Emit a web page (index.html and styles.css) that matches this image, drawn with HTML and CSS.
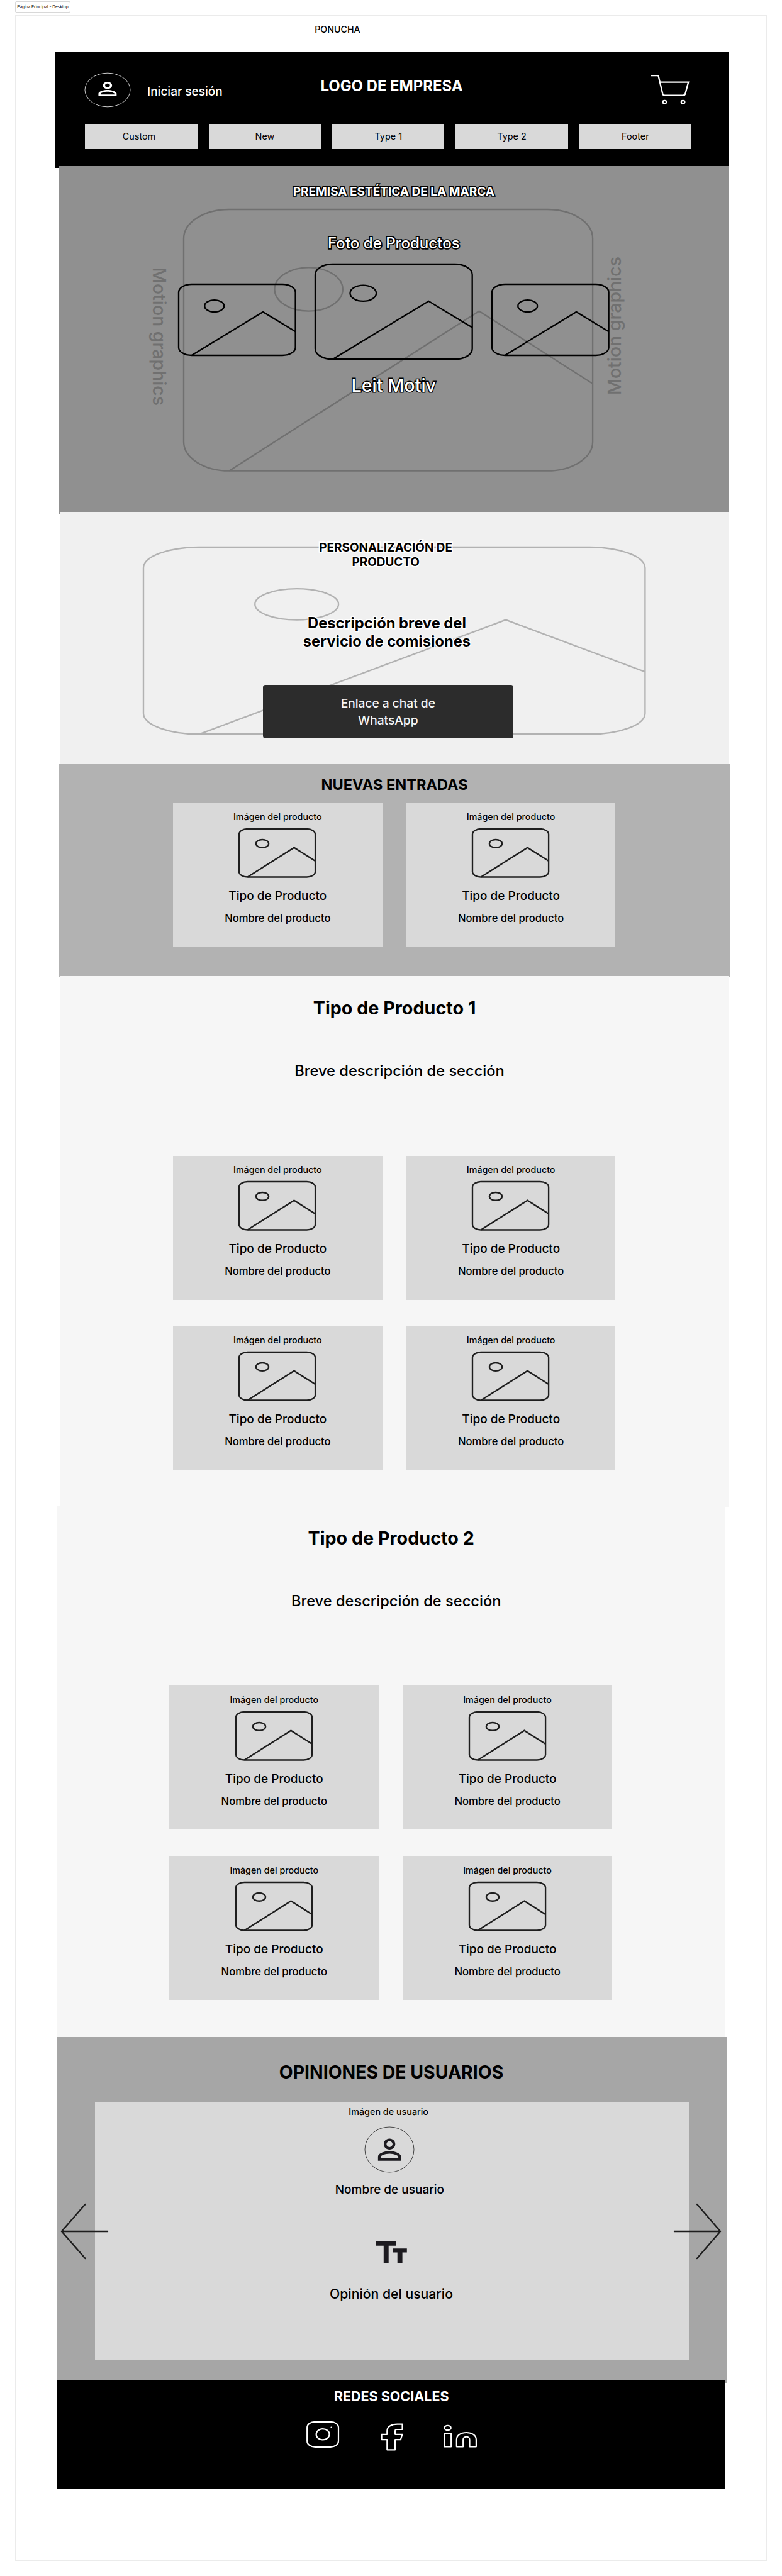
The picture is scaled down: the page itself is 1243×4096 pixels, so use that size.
FILE: index.html
```html
<!DOCTYPE html>
<html lang="es">
<head>
<meta charset="utf-8">
<title>Página Principal - Desktop</title>
<link rel="stylesheet" href="styles.css">
</head>
<body>
<svg class="defs" width="0" height="0" aria-hidden="true">
  <defs>
    <g id="photo">
      <rect x="0" y="0" width="18" height="18" rx="2"/>
      <circle cx="5.5" cy="5.5" r="1.5"/>
      <path d="M18 12L13 7L2 18"/>
    </g>
    <path id="person" d="M12 5.9a2.1 2.1 0 1 1 0 4.2 2.1 2.1 0 0 1 0-4.2m0 9c2.97 0 6.1 1.46 6.1 2.1v1.1H5.9V17c0-.64 3.13-2.1 6.1-2.1M12 4C9.79 4 8 5.79 8 8s1.79 4 4 4 4-1.79 4-4-1.79-4-4-4m0 9c-2.67 0-8 1.34-8 4v3h16v-3c0-2.66-5.33-4-8-4"/>
  </defs>
</svg>

<div class="label">Página Principal - Desktop</div>

<main class="frame">
  <div class="brand">PONUCHA</div>

  <header class="header">
    <div class="header-top">
      <svg class="avatar" width="74" height="56" viewBox="0 0 74 56">
        <ellipse cx="37" cy="28" rx="36" ry="26.8"/>
        <svg x="15.2" y="9.2" width="43.4" height="34.6" viewBox="0 0 24 24" preserveAspectRatio="none"><use href="#person"/></svg>
      </svg>
      <a class="login">Iniciar sesión</a>
      <h1 class="logo">LOGO DE EMPRESA</h1>
      <svg class="cart" width="66" height="52" viewBox="0 0 66 52">
        <path d="M2 3.2H14.4L21.2 31.6Q22 34.6 24.6 34.6H53.8Q56.6 34.6 57.4 31.6L62.2 13.7H16.8"/>
        <ellipse cx="24.4" cy="45.2" rx="2.8" ry="2.3"/>
        <ellipse cx="53.6" cy="45.2" rx="2.8" ry="2.3"/>
      </svg>
    </div>
    <nav class="nav">
      <a class="nudge">Custom</a><a>New</a><a>Type 1</a><a>Type 2</a><a>Footer</a>
    </nav>
  </header>

  <section class="hero">
    <svg class="photo hero-backdrop" viewBox="0 0 18 18" preserveAspectRatio="none"><use href="#photo"/></svg>
    <span class="motion motion-left">Motion graphics</span>
    <span class="motion motion-right">Motion graphics</span>
    <div class="hero-content">
      <h2 class="hero-title">PREMISA ESTÉTICA DE LA MARCA</h2>
      <p class="hero-sub">Foto de Productos</p>
      <div class="hero-photos">
        <svg class="photo side" viewBox="0 0 18 18" preserveAspectRatio="none"><use href="#photo"/></svg>
        <svg class="photo main" viewBox="0 0 18 18" preserveAspectRatio="none"><use href="#photo"/></svg>
        <svg class="photo side" viewBox="0 0 18 18" preserveAspectRatio="none"><use href="#photo"/></svg>
      </div>
      <p class="hero-motiv">Leit Motiv</p>
    </div>
  </section>

  <section class="custom">
    <svg class="photo custom-backdrop" viewBox="0 0 18 18" preserveAspectRatio="none"><use href="#photo"/></svg>
    <div class="custom-content">
      <h2 class="custom-title">PERSONALIZACIÓN DE<br>PRODUCTO</h2>
      <p class="custom-text">Descripción breve del<br>servicio de comisiones</p>
      <a class="button">Enlace a chat de<br>WhatsApp</a>
    </div>
  </section>

  <section class="news">
    <h2 class="news-title">NUEVAS ENTRADAS</h2>
    <div class="cards">
      <article class="card"><p class="card-image">Imágen del producto</p><svg class="photo" viewBox="0 0 18 18" preserveAspectRatio="none"><use href="#photo"/></svg><h3>Tipo de Producto</h3><p class="card-name">Nombre del producto</p></article>
      <article class="card"><p class="card-image">Imágen del producto</p><svg class="photo" viewBox="0 0 18 18" preserveAspectRatio="none"><use href="#photo"/></svg><h3>Tipo de Producto</h3><p class="card-name">Nombre del producto</p></article>
    </div>
  </section>

  <section class="products products-one">
    <h2>Tipo de Producto 1</h2>
    <p class="intro">Breve descripción de sección</p>
    <div class="cards">
      <article class="card"><p class="card-image">Imágen del producto</p><svg class="photo" viewBox="0 0 18 18" preserveAspectRatio="none"><use href="#photo"/></svg><h3>Tipo de Producto</h3><p class="card-name">Nombre del producto</p></article>
      <article class="card"><p class="card-image">Imágen del producto</p><svg class="photo" viewBox="0 0 18 18" preserveAspectRatio="none"><use href="#photo"/></svg><h3>Tipo de Producto</h3><p class="card-name">Nombre del producto</p></article>
      <article class="card"><p class="card-image">Imágen del producto</p><svg class="photo" viewBox="0 0 18 18" preserveAspectRatio="none"><use href="#photo"/></svg><h3>Tipo de Producto</h3><p class="card-name">Nombre del producto</p></article>
      <article class="card"><p class="card-image">Imágen del producto</p><svg class="photo" viewBox="0 0 18 18" preserveAspectRatio="none"><use href="#photo"/></svg><h3>Tipo de Producto</h3><p class="card-name">Nombre del producto</p></article>
    </div>
  </section>

  <section class="products products-two">
    <h2>Tipo de Producto 2</h2>
    <p class="intro">Breve descripción de sección</p>
    <div class="cards">
      <article class="card"><p class="card-image">Imágen del producto</p><svg class="photo" viewBox="0 0 18 18" preserveAspectRatio="none"><use href="#photo"/></svg><h3>Tipo de Producto</h3><p class="card-name">Nombre del producto</p></article>
      <article class="card"><p class="card-image">Imágen del producto</p><svg class="photo" viewBox="0 0 18 18" preserveAspectRatio="none"><use href="#photo"/></svg><h3>Tipo de Producto</h3><p class="card-name">Nombre del producto</p></article>
      <article class="card"><p class="card-image">Imágen del producto</p><svg class="photo" viewBox="0 0 18 18" preserveAspectRatio="none"><use href="#photo"/></svg><h3>Tipo de Producto</h3><p class="card-name">Nombre del producto</p></article>
      <article class="card"><p class="card-image">Imágen del producto</p><svg class="photo" viewBox="0 0 18 18" preserveAspectRatio="none"><use href="#photo"/></svg><h3>Tipo de Producto</h3><p class="card-name">Nombre del producto</p></article>
    </div>
  </section>

  <section class="reviews">
    <h2>OPINIONES DE USUARIOS</h2>
    <div class="review">
      <p class="review-image">Imágen de usuario</p>
      <svg class="review-avatar" width="80" height="74" viewBox="0 0 80 74">
        <ellipse cx="40" cy="37" rx="39" ry="36"/>
        <svg x="12.7" y="10.8" width="54.9" height="52.6" viewBox="0 0 24 24" preserveAspectRatio="none"><use href="#person"/></svg>
      </svg>
      <p class="review-user">Nombre de usuario</p>
      <svg class="text-size" width="49" height="35" viewBox="0 0 49 35">
        <path d="M0 0H31.9V6.8H19.7V35H11.8V6.8H0ZM26.6 11.2H48.8V17.4H41.6V35H33.7V17.4H26.6Z"/>
      </svg>
      <p class="review-text">Opinión del usuario</p>
    </div>
    <svg class="arrow arrow-left" width="77" height="90" viewBox="0 0 77 90"><path d="M75 45H2M39.4 2L2 45L39.4 88"/></svg>
    <svg class="arrow arrow-right" width="77" height="90" viewBox="0 0 77 90"><path d="M2 45H75M38 2L75 45L38 88"/></svg>
  </section>

  <footer class="footer">
    <h2>REDES SOCIALES</h2>
    <div class="social">
      <svg width="54" height="44" viewBox="0 0 54 44">
        <rect x="2.2" y="1.8" width="49.8" height="40" rx="12.5" ry="9"/>
        <ellipse cx="27.1" cy="21.8" rx="10.5" ry="8.6"/>
        <ellipse class="dot" cx="40.7" cy="10.7" rx="1.3" ry="1.1"/>
      </svg>
      <svg class="facebook" width="38" height="46" viewBox="0 0 38 46">
        <path d="M35.5 2.7H27.5C19 2.7 11.3 6 11.3 13V18.8H2.6V27.1H11.3V43.3H24.1V27.1H32.8L35.5 18.8H24.1V13.2Q24.1 11 27 11H35.5Z"/>
      </svg>
      <svg class="linkedin" width="55" height="38" viewBox="0 0 55 38">
        <ellipse cx="7.6" cy="5.5" rx="5.2" ry="3.6"/>
        <rect x="2.2" y="14.7" width="11" height="20.6"/>
        <path d="M21.8 35.3V24C21.8 17 29 13 37.3 13S52.9 17 52.9 24V35.3H42.5V24a5.15 4.3 0 0 0-10.3 0V35.3Z"/>
      </svg>
    </div>
  </footer>
</main>
</body>
</html>
```
FILE: styles.css
```css
* { box-sizing: border-box; }

body {
  margin: 0;
  background: #fff;
  color: #000;
  font-family: Inter, "Liberation Sans", sans-serif;
  font-weight: 500;
}

h1, h2, h3, p { margin: 0; font-weight: inherit; }

svg { display: block; flex: none; }

.defs { position: absolute; }

.label {
  width: 88px;
  height: 18px;
  margin: 2px 0 4px 24px;
  border: 1px solid #d8d8d8;
  border-radius: 2px;
  font-size: 6.5px;
  font-weight: 400;
  line-height: 16px;
  text-align: center;
  white-space: nowrap;
}

.frame {
  width: 1195px;
  height: 4047.5px;
  margin-left: 24px;
  border: 1px solid #ebebeb;
}

.brand {
  height: 57.8px;
  padding-left: 475.2px;
  font-size: 14.22px;
  line-height: 43.8px;
}

.frame > header,
.frame > section,
.frame > footer { position: relative; }

/* Line-art picture placeholder */
.photo {
  overflow: visible;
  fill: none;
  stroke: #1e1e1e;
  stroke-width: 2.35px;
}
#photo * { vector-effect: non-scaling-stroke; }

/* Header */
.header {
  width: 1070.2px;
  height: 184px;
  margin: 0 0 -3px 63.3px;
  padding: 32.5px 0 0 47.2px;
  background: #000;
  color: #fff;
}
.header-top {
  display: grid;
  grid-template-columns: 98.5px 275.5px 522.5px 66px;
  align-items: start;
  height: 56px;
}
.avatar { margin-left: -1px; }
.avatar ellipse { fill: none; stroke: #fff; stroke-width: .8; }
.avatar use { fill: #fff; }
.login { margin-top: 18.3px; font-size: 19.03px; line-height: 24px; }
.logo { margin-top: 6.5px; font-size: 23.88px; font-weight: 700; line-height: 30px; }
.cart {
  margin-top: 1.6px;
  fill: none;
  stroke: #fff;
  stroke-width: 2.3;
}
.nav { display: flex; gap: 17.9px; margin-top: 25.7px; color: #000; }
.nav a {
  width: 178.4px;
  height: 39.6px;
  background: #d9d9d9;
  font-size: 14.4px;
  font-weight: 400;
  line-height: 39.6px;
  text-align: center;
}
.nav .nudge { padding-right: 7.4px; }

/* Hero */
.hero {
  width: 1065.7px;
  height: 554.4px;
  margin: 0 0 -4.4px 68px;
  background: #909090;
  text-align: center;
}
.hero-backdrop {
  position: absolute;
  left: 198.6px;
  top: 69.1px;
  width: 650.1px;
  height: 415.7px;
  stroke: #707070;
}
.motion {
  position: absolute;
  color: #707070;
  font-size: 28.45px;
  line-height: 34px;
  white-space: nowrap;
  writing-mode: vertical-rl;
}
.motion-left { left: 143.3px; top: 161.2px; }
.motion-right { left: 867.3px; bottom: 190.2px; transform: rotate(180deg); }
.hero-content { position: relative; padding-top: 28.8px; color: #fff; }
.hero-title, .hero-sub, .hero-motiv {
  -webkit-text-stroke: 3.6px #000;
  paint-order: stroke fill;
}
.hero-title { font-size: 19.03px; font-weight: 700; line-height: 24px; }
.hero-sub { margin-top: 55.8px; font-size: 24.05px; line-height: 30px; }
.hero-motiv { margin-top: 24.4px; font-size: 28.65px; line-height: 34px; -webkit-text-stroke-width: 3px; }
.hero-photos { display: flex; gap: 31.1px; margin-top: 17.8px; padding-left: 191.1px; }
.hero-photos .photo { stroke: #000; }
.hero-photos .side { width: 185.6px; height: 113px; margin-top: 31.5px; }
.hero-photos .main { width: 249.7px; height: 151.3px; }

/* Commission block */
.custom {
  width: 1062.6px;
  height: 401.7px;
  margin-left: 70.9px;
  background: #f0f0f0;
}
.custom-backdrop {
  position: absolute;
  left: 132.6px;
  top: 56.7px;
  width: 797.4px;
  height: 297.3px;
  stroke: #b2b2b2;
}
.custom-content {
  position: relative;
  width: 398px;
  margin-left: 321.9px;
  padding-top: 45px;
  text-align: center;
}
.custom-title, .custom-text {
  font-weight: 700;
  -webkit-text-stroke: 3.6px #fff;
  paint-order: stroke fill;
}
.custom-title { padding-right: 7.2px; font-size: 18.96px; line-height: 23px; }
.custom-text {
  margin-top: 72.2px;
  padding-right: 3.6px;
  font-size: 23.72px;
  line-height: 28.8px;
  -webkit-text-stroke-width: 3px;
}
.button {
  display: block;
  height: 84.5px;
  margin-top: 54.8px;
  padding-top: 15.5px;
  border-radius: 4px;
  background: #2c2c2c;
  color: #f5f5f5;
  font-size: 19.15px;
  line-height: 27px;
}

/* Product cards */
.cards {
  display: grid;
  grid-template-columns: 332.6px 332.6px;
  gap: 42px 38.2px;
}
.card {
  display: flex;
  flex-direction: column;
  align-items: center;
  height: 229px;
  padding-top: 13.2px;
  background: #d9d9d9;
}
.card-image { font-size: 14.29px; line-height: 18px; }
.card .photo { width: 121.1px; height: 76.5px; margin: 10px 1px 0 0; }
.card h3 { margin-top: 18.4px; font-size: 18.99px; line-height: 24px; }
.card-name { margin-top: 13.1px; font-size: 16.62px; line-height: 20px; }

.news {
  width: 1066.2px;
  height: 337.5px;
  margin: 0 0 -.7px 69px;
  padding-top: 18px;
  background: #b2b2b2;
}
.news-title {
  margin-bottom: 13.5px;
  font-size: 23.56px;
  font-weight: 700;
  line-height: 30px;
  text-align: center;
}
.news .cards { padding-left: 181px; }

.products {
  padding-top: 32.7px;
  background: #f6f6f6;
  text-align: center;
}
.products-one { width: 1062.5px; height: 843.4px; margin: 0 0 -.7px 70.8px; }
.products-two { width: 1063px; height: 843.6px; margin-left: 65.2px; }
.products h2 { font-size: 28.72px; font-weight: 700; line-height: 36px; }
.intro { margin: 67.2px 0 119.6px; padding-left: 16px; font-size: 23.65px; line-height: 30px; }
.products .cards { padding-left: 179.3px; }

/* Reviews */
.reviews {
  width: 1064.8px;
  height: 550px;
  margin: 0 0 -4.6px 65.5px;
  padding-top: 38px;
  background: #a6a6a6;
}
.reviews h2 {
  padding-right: 1.8px;
  font-size: 28.42px;
  font-weight: 700;
  line-height: 36px;
  text-align: center;
}
.review {
  display: flex;
  flex-direction: column;
  align-items: center;
  width: 944.2px;
  height: 410.1px;
  margin: 30.7px 0 0 60.4px;
  padding-top: 5.5px;
  background: #d9d9d9;
}
.review-image { padding-right: 10.6px; font-size: 14.34px; line-height: 18px; }
.review-avatar { margin: 14px 7.8px 0 0; }
.review-avatar ellipse { fill: none; stroke: #1e1e1e; stroke-width: .8; }
.review-avatar use { fill: #1d1b20; }
.review-user { margin-top: 15.1px; padding-right: 7.2px; font-size: 19px; line-height: 24px; }
.text-size { margin-top: 70.3px; fill: #1d1b20; }
.review-text { margin-top: 33.6px; padding-right: 2px; font-size: 21.18px; line-height: 28px; }
.arrow {
  position: absolute;
  top: 264.6px;
  fill: none;
  stroke: #1e1e1e;
  stroke-width: 2.4;
  stroke-linecap: round;
  stroke-linejoin: round;
}
.arrow-left { left: 5.2px; }
.arrow-right { left: 979.5px; }

/* Footer */
.footer {
  width: 1063.5px;
  height: 173.1px;
  margin-left: 64.7px;
  padding-top: 13.2px;
  background: #000;
  color: #fff;
}
.footer h2 {
  padding-left: 1.6px;
  font-size: 21.47px;
  font-weight: 700;
  line-height: 26px;
  text-align: center;
}
.social {
  display: flex;
  align-items: flex-start;
  margin-top: 25.8px;
  padding-left: 396.3px;
}
.social svg { fill: none; stroke: #fff; stroke-width: 2.2; stroke-linejoin: round; }
.social .dot { fill: #fff; stroke: none; }
.facebook { margin: 3px 0 0 64px; }
.linkedin { margin: 6px 0 0 62px; }
```
